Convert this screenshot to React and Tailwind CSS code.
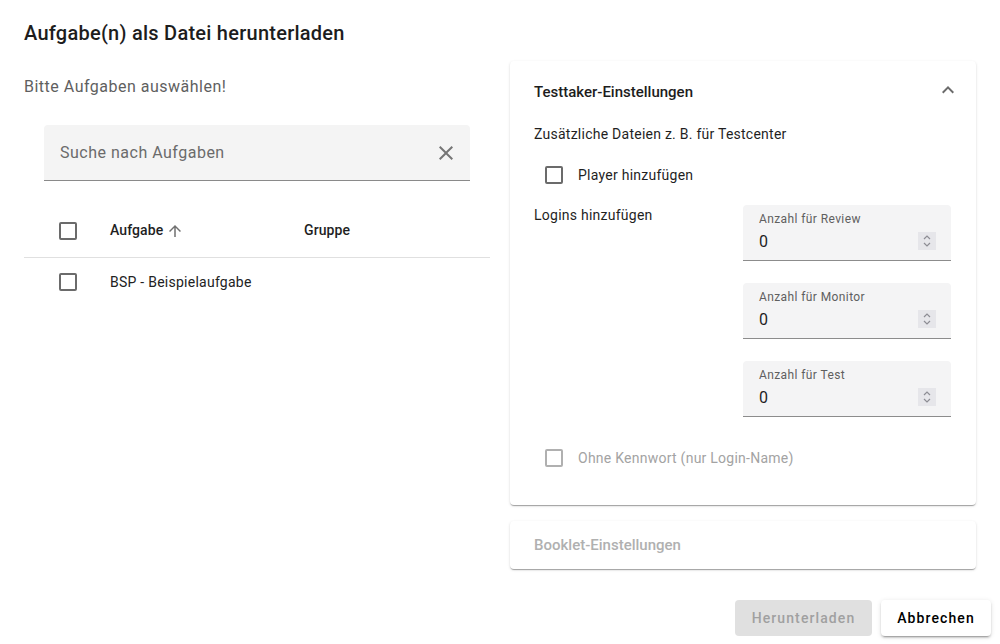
import React from 'react';

const Checkbox = ({ disabled }) => (
  <span
    className={`block w-[18px] h-[18px] rounded-[2px] border-2 ${disabled ? 'border-[#b0b0b0]' : 'border-[#6b6b6b]'}`}
  />
);

const NumberField = ({ label }) => (
  <div className="w-[208px] h-[56px] bg-[#f4f4f5] rounded-t-[4px] border-b border-[#8c8c8c] px-4 pt-[7px] relative">
    <div className="text-[12px] leading-[14px] tracking-[0.4px] text-[#5f5f5f]">{label}</div>
    <div className="text-[16px] leading-[24px] text-[#1f1f1f] mt-[4px]">0</div>
    <div className="absolute right-[15px] top-[27px] w-[18px] h-[18px] bg-[#e6e6ea] flex items-center justify-center">
      <svg width="10" height="14" viewBox="0 0 10 14" fill="none" stroke="#8d8d94" strokeWidth="1.2">
        <path d="M2 5 L5 2 L8 5" />
        <path d="M2 9 L5 12 L8 9" />
      </svg>
    </div>
  </div>
);

export default function App() {
  return (
    <div className="w-[1000px] h-[644px] bg-white font-['Roboto',sans-serif] text-[#1f1f1f] flex flex-col overflow-hidden">
      <h2 className="px-6 pt-[19px] text-[20px] leading-[28px] font-medium tracking-[0.25px] text-[#1d1d1d]">
        Aufgabe(n) als Datei herunterladen
      </h2>

      <div className="flex gap-5 px-6 pt-[27px]">
        <div className="w-[466px]">
          <div className="text-[16px] leading-[24px] tracking-[0.5px] text-[#5f5f5f] pt-[1px]">Bitte Aufgaben auswählen!</div>

          <div className="mx-5 mt-[26px] h-[56px] bg-[#f4f4f4] rounded-t-[4px] border-b border-[#8a8a8a] flex items-center pl-4 pr-3">
            <span className="flex-1 text-[16px] tracking-[0.5px] text-[#6b6b6b]">Suche nach Aufgaben</span>
            <svg width="24" height="24" viewBox="0 0 24 24" fill="#757575">
              <path d="M19 6.41 17.59 5 12 10.59 6.41 5 5 6.41 10.59 12 5 17.59 6.41 19 12 13.41 17.59 19 19 17.59 13.41 12z" />
            </svg>
          </div>

          <div className="mt-[23px]">
            <div className="h-[54px] flex items-center border-b border-[#e0e0e0]">
              <div className="w-[86px] pl-[35px]"><Checkbox /></div>
              <div className="w-[194px] flex items-center gap-[3px] text-[14px] font-medium tracking-[0.1px]">
                Aufgabe
                <svg width="18" height="18" viewBox="0 0 24 24" fill="#707070">
                  <path d="M4 12l1.41 1.41L11 7.83V20h2V7.83l5.58 5.59L20 12l-8-8-8 8z" />
                </svg>
              </div>
              <div className="text-[14px] font-medium tracking-[0.1px]">Gruppe</div>
            </div>
            <div className="h-[48px] flex items-center">
              <div className="w-[86px] pl-[35px]"><Checkbox /></div>
              <div className="text-[14px] tracking-[0.25px] text-[#222]">BSP - Beispielaufgabe</div>
            </div>
          </div>
        </div>

        <div className="w-[466px] flex flex-col gap-4 -mt-[13px]">
          <div className="bg-white rounded-[4px] shadow-[0_2px_1px_-1px_rgba(0,0,0,0.2),0_1px_1px_0_rgba(0,0,0,0.14),0_1px_3px_0_rgba(0,0,0,0.12)] px-6 h-[444px]">
            <div className="h-[62px] flex items-center justify-between">
              <span className="text-[15px] font-medium text-[#1d1d1d]">Testtaker-Einstellungen</span>
              <svg width="24" height="24" viewBox="0 0 24 24" fill="#6b6b6b" className="-mr-[8px] -mt-[4px]">
                <path d="M7.41 15.41 12 10.83l4.59 4.58L18 14l-6-6-6 6z" />
              </svg>
            </div>
            <div className="text-[14px] leading-[20px] tracking-[0.25px] pt-[1px]">Zusätzliche Dateien z. B. für Testcenter</div>
            <div className="flex items-center h-[20px] mt-[21px] pl-[11px] gap-[15px]">
              <Checkbox />
              <span className="text-[14px] tracking-[0.25px]">Player hinzufügen</span>
            </div>
            <div className="flex justify-between mt-[20px]">
              <div className="text-[14px] leading-[20px] tracking-[0.25px] pt-[0px]">Logins hinzufügen</div>
              <div className="flex flex-col gap-[22px] mr-[1px]">
                <NumberField label="Anzahl für Review" />
                <NumberField label="Anzahl für Monitor" />
                <NumberField label="Anzahl für Test" />
              </div>
            </div>
            <div className="flex items-center h-[20px] mt-[31px] pl-[11px] gap-[15px]">
              <Checkbox disabled />
              <span className="text-[14px] tracking-[0.25px] text-[#a3a3a3]">Ohne Kennwort (nur Login-Name)</span>
            </div>
          </div>

          <div className="bg-white rounded-[4px] shadow-[0_2px_1px_-1px_rgba(0,0,0,0.2),0_1px_1px_0_rgba(0,0,0,0.14),0_1px_3px_0_rgba(0,0,0,0.12)] px-6 h-[48px] flex items-center">
            <span className="text-[15px] font-medium text-[#b0b0b0]">Booklet-Einstellungen</span>
          </div>
        </div>
      </div>

      <div className="flex-1" />
      <div className="flex justify-end gap-[9px] pr-[9px] pb-[8px]">
        <button className="w-[137px] h-[36px] rounded-[4px] bg-[#e0e0e0] text-[14px] font-medium tracking-[1.1px] text-[#a0a0a0]">
          Herunterladen
        </button>
        <button className="w-[110px] h-[36px] rounded-[4px] bg-white text-[14px] font-medium tracking-[1.1px] text-black shadow-[0_3px_1px_-2px_rgba(0,0,0,0.2),0_2px_2px_0_rgba(0,0,0,0.14),0_1px_5px_0_rgba(0,0,0,0.12)]">
          Abbrechen
        </button>
      </div>
    </div>
  );
}
